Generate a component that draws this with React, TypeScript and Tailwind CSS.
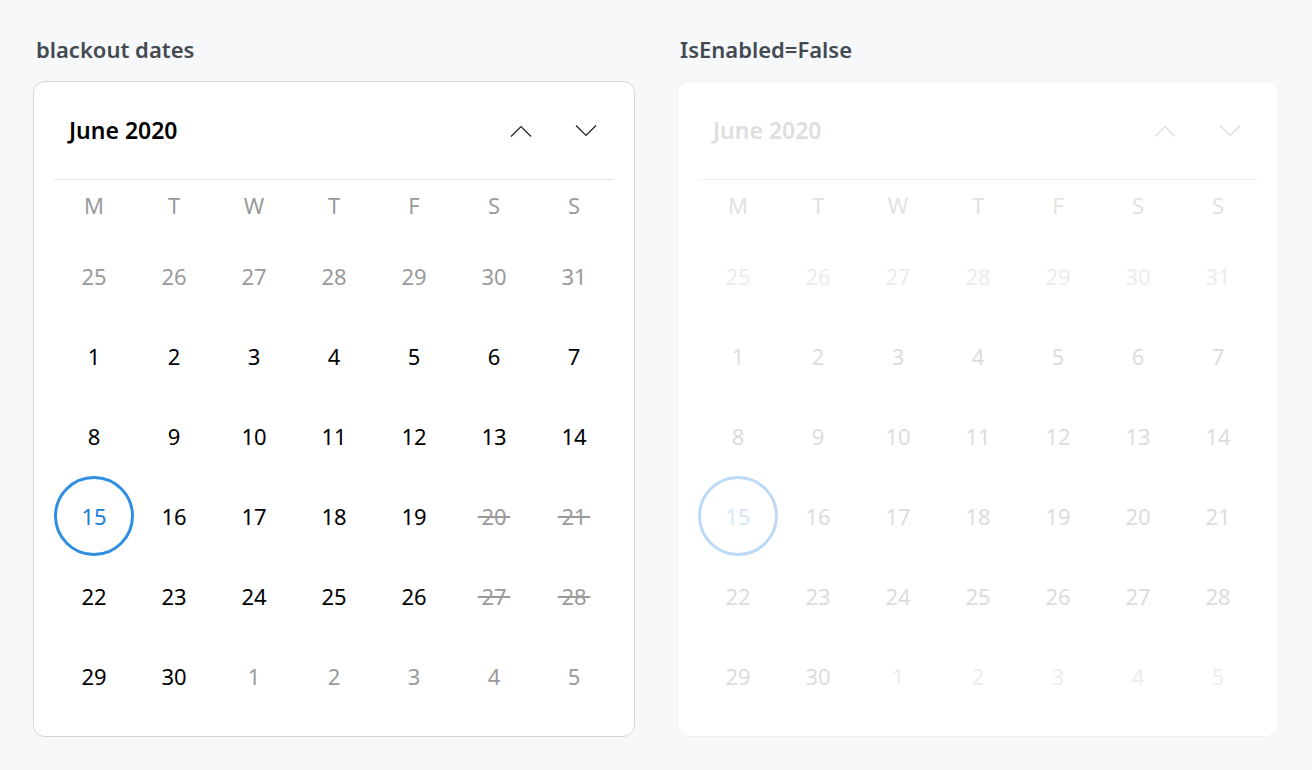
import React from 'react';

type Day = { n: number; muted?: boolean; blackout?: boolean; selected?: boolean };

const weekdays = ['M', 'T', 'W', 'T', 'F', 'S', 'S'];

const blackout = new Set([20, 21, 27, 28]);

function buildDays(): Day[] {
  const days: Day[] = [];
  for (let d = 25; d <= 31; d++) days.push({ n: d, muted: true });
  for (let d = 1; d <= 30; d++) days.push({ n: d, blackout: blackout.has(d), selected: d === 15 });
  for (let d = 1; d <= 5; d++) days.push({ n: d, muted: true });
  return days;
}

function ChevronUp() {
  return (
    <svg width="22" height="12" viewBox="0 0 22 12" fill="none">
      <polyline points="1,11.5 11,1.5 21,11.5" stroke="currentColor" strokeWidth="1.2" />
    </svg>
  );
}

function ChevronDown() {
  return (
    <svg width="22" height="12" viewBox="0 0 22 12" fill="none">
      <polyline points="1,0.5 11,10.5 21,0.5" stroke="currentColor" strokeWidth="1.2" />
    </svg>
  );
}

function Calendar({ enabled, showBlackout }: { enabled: boolean; showBlackout: boolean }) {
  const days = buildDays();

  const dayColor = (d: Day) => {
    if (!enabled) return d.selected ? 'text-[#d6e8f8]' : d.muted ? 'text-[#ececec]' : 'text-[#dcdcdc]';
    if (d.selected) return 'text-[#1a7fd6]';
    if (d.muted || (showBlackout && d.blackout)) return 'text-[#9a9a9a]';
    return 'text-black';
  };

  return (
    <div
      className={`flex flex-col rounded-xl border bg-white ${
        enabled ? 'border-[#d6d6d6]' : 'border-[#f0f0f0]'
      }`}
    >
      {/* header */}
      <div className="flex h-[97px] items-center justify-between pl-[35px] pr-[37px]">
        <span className={`text-[23px] font-semibold ${enabled ? 'text-black' : 'text-[#dedede]'}`}>June 2020</span>
        <div className={`flex items-center gap-[43px] ${enabled ? 'text-[#1f1f1f]' : 'text-[#dcdcdc]'}`}>
          <ChevronUp />
          <ChevronDown />
        </div>
      </div>
      <div className={`mx-[20px] h-px ${enabled ? 'bg-[#e6e6e6]' : 'bg-[#f3f3f3]'}`} />

      {/* weekday row */}
      <div className="mx-[20px] grid h-[50px] grid-cols-7 items-center">
        {weekdays.map((w, i) => (
          <span key={i} className={`text-center text-[22px] ${enabled ? 'text-[#9a9a9a]' : 'text-[#e2e2e2]'}`}>
            {w}
          </span>
        ))}
      </div>

      {/* day grid */}
      <div className="mx-[20px] mb-[20px] mt-[6px] grid grid-cols-7 auto-rows-[80px]">
        {days.map((d, i) => (
          <div key={i} className="flex items-center justify-center">
            {d.selected ? (
              <div
                className={`flex h-[80px] w-[80px] items-center justify-center rounded-full border-[3px] ${
                  enabled ? 'border-[#2f8ee3]' : 'border-[#bcdaf5]'
                }`}
              >
                <span className={`text-[22px] ${dayColor(d)}`}>{d.n}</span>
              </div>
            ) : (
              <span
                className={`text-[22px] ${dayColor(d)} ${
                  showBlackout && d.blackout ? 'line-through decoration-[#9a9a9a] decoration-[1.5px]' : ''
                }`}
              >
                {showBlackout && d.blackout ? `\u2009${d.n}\u2009` : d.n}
              </span>
            )}
          </div>
        ))}
      </div>
    </div>
  );
}

export default function App() {
  return (
    <div
      className="min-h-[770px] bg-[#f7f8fa] px-[33px] pt-[33px]"
      style={{ fontFamily: '"Noto Sans", "Open Sans", sans-serif' }}
    >
      <div className="flex gap-[42px]">
        <div className="flex w-[602px] flex-col">
          <h2 className="ml-[3px] text-[22px] font-semibold leading-[32px] text-[#434a52]">blackout dates</h2>
          <div className="mt-[16px]">
            <Calendar enabled showBlackout />
          </div>
        </div>
        <div className="flex w-[602px] flex-col">
          <h2 className="ml-[3px] text-[22px] font-semibold leading-[32px] text-[#434a52]">IsEnabled=False</h2>
          <div className="mt-[16px]">
            <Calendar enabled={false} showBlackout={false} />
          </div>
        </div>
      </div>
    </div>
  );
}
